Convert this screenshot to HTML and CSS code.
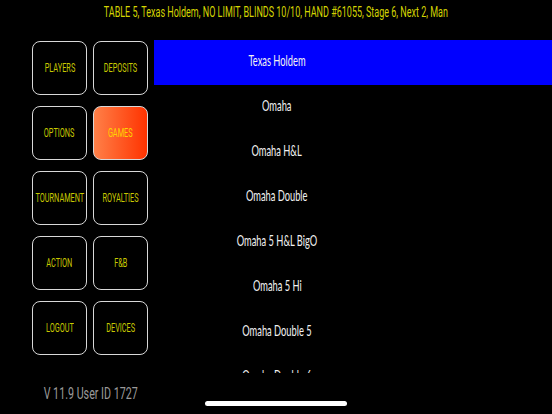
FILE: index.html
```html
<!DOCTYPE html>
<html>
<head>
<meta charset="utf-8">
<link rel="stylesheet" href="styles.css">
</head>
<body>
<div class="screen">
  <header class="header"><span class="header-text">TABLE 5, Texas Holdem, NO LIMIT, BLINDS 10/10, HAND #61055, Stage 6, Next 2, Man</span></header>
  <div class="main">
    <aside class="side">
      <div class="grid">
        <div class="btn"><span class="btn-text">PLAYERS</span></div>
        <div class="btn"><span class="btn-text">DEPOSITS</span></div>
        <div class="btn"><span class="btn-text">OPTIONS</span></div>
        <div class="btn active"><span class="btn-text">GAMES</span></div>
        <div class="btn"><span class="btn-text">TOURNAMENT</span></div>
        <div class="btn"><span class="btn-text">ROYALTIES</span></div>
        <div class="btn"><span class="btn-text">ACTION</span></div>
        <div class="btn"><span class="btn-text">F&amp;B</span></div>
        <div class="btn"><span class="btn-text">LOGOUT</span></div>
        <div class="btn"><span class="btn-text">DEVICES</span></div>
      </div>
      <div class="version"><span class="version-text">V 11.9 User ID 1727</span></div>
    </aside>
    <section class="list">
      <div class="row selected"><span class="label"><span class="label-text">Texas Holdem</span></span></div>
      <div class="row"><span class="label"><span class="label-text">Omaha</span></span></div>
      <div class="row"><span class="label"><span class="label-text">Omaha H&amp;L</span></span></div>
      <div class="row"><span class="label"><span class="label-text">Omaha Double</span></span></div>
      <div class="row"><span class="label"><span class="label-text">Omaha 5 H&amp;L BigO</span></span></div>
      <div class="row"><span class="label"><span class="label-text">Omaha 5 Hi</span></span></div>
      <div class="row"><span class="label"><span class="label-text">Omaha Double 5</span></span></div>
      <div class="row"><span class="label"><span class="label-text">Omaha Double 6</span></span></div>
    </section>
  </div>
  <div class="home-indicator"></div>
</div>
</body>
</html>
```
FILE: styles.css
```css
html, body {
  margin: 0;
  padding: 0;
  background: #000;
}
.screen {
  position: relative;
  width: 552px;
  height: 414px;
  background: #000;
  overflow: hidden;
  font-family: "Liberation Sans", Arial, sans-serif;
}
.header {
  height: 40px;
  display: flex;
  justify-content: center;
  padding-top: 4px;
  box-sizing: border-box;
}
.header-text {
  display: inline-block;
  white-space: nowrap;
  color: #d4d400;
  font-family: Roboto, "Liberation Sans", sans-serif;
  font-size: 15px;
  line-height: 17px;
  transform: scaleX(0.6);
}
.main {
  display: flex;
  height: 374px;
}
.side {
  width: 154px;
  flex: none;
  display: flex;
  flex-direction: column;
}
.grid {
  display: grid;
  grid-template-columns: 55px 55px;
  grid-auto-rows: 54px;
  column-gap: 6px;
  row-gap: 11px;
  padding: 1px 0 0 32px;
}
.btn {
  box-sizing: border-box;
  border: 1.5px solid #d8d8d8;
  border-radius: 8px;
  display: flex;
  align-items: center;
  justify-content: center;
  overflow: visible;
}
.btn-text {
  display: inline-block;
  white-space: nowrap;
  color: #c8c800;
  font-family: Roboto, "Liberation Sans", sans-serif;
  font-size: 12px;
  transform: scaleX(0.61);
}
.btn.active {
  background: linear-gradient(to right, #ff8048, #ff3300);
}
.btn.active .btn-text {
  color: #ffd400;
}
.version {
  margin-top: 28px;
  display: flex;
  justify-content: center;
  padding-left: 27px;
}
.version-text {
  display: inline-block;
  white-space: nowrap;
  color: #9a9a9a;
  font-family: Roboto, "Liberation Sans", sans-serif;
  font-size: 17px;
  transform: scaleX(0.63);
}
.list {
  flex: 1;
  height: 333px;
  overflow: hidden;
}
.row {
  height: 45px;
  display: flex;
  align-items: center;
}
.row.selected {
  background: #0000ff;
}
.label {
  width: 246px;
  display: flex;
  justify-content: center;
  padding-bottom: 5px;
}
.label-text {
  display: inline-block;
  white-space: nowrap;
  color: #f2f2f2;
  font-family: Lato, "Open Sans", sans-serif;
  font-size: 15px;
  transform: scaleX(0.62);
}
.home-indicator {
  position: absolute;
  left: 205px;
  top: 401px;
  width: 142px;
  height: 5px;
  border-radius: 3px;
  background: #fff;
}
```
